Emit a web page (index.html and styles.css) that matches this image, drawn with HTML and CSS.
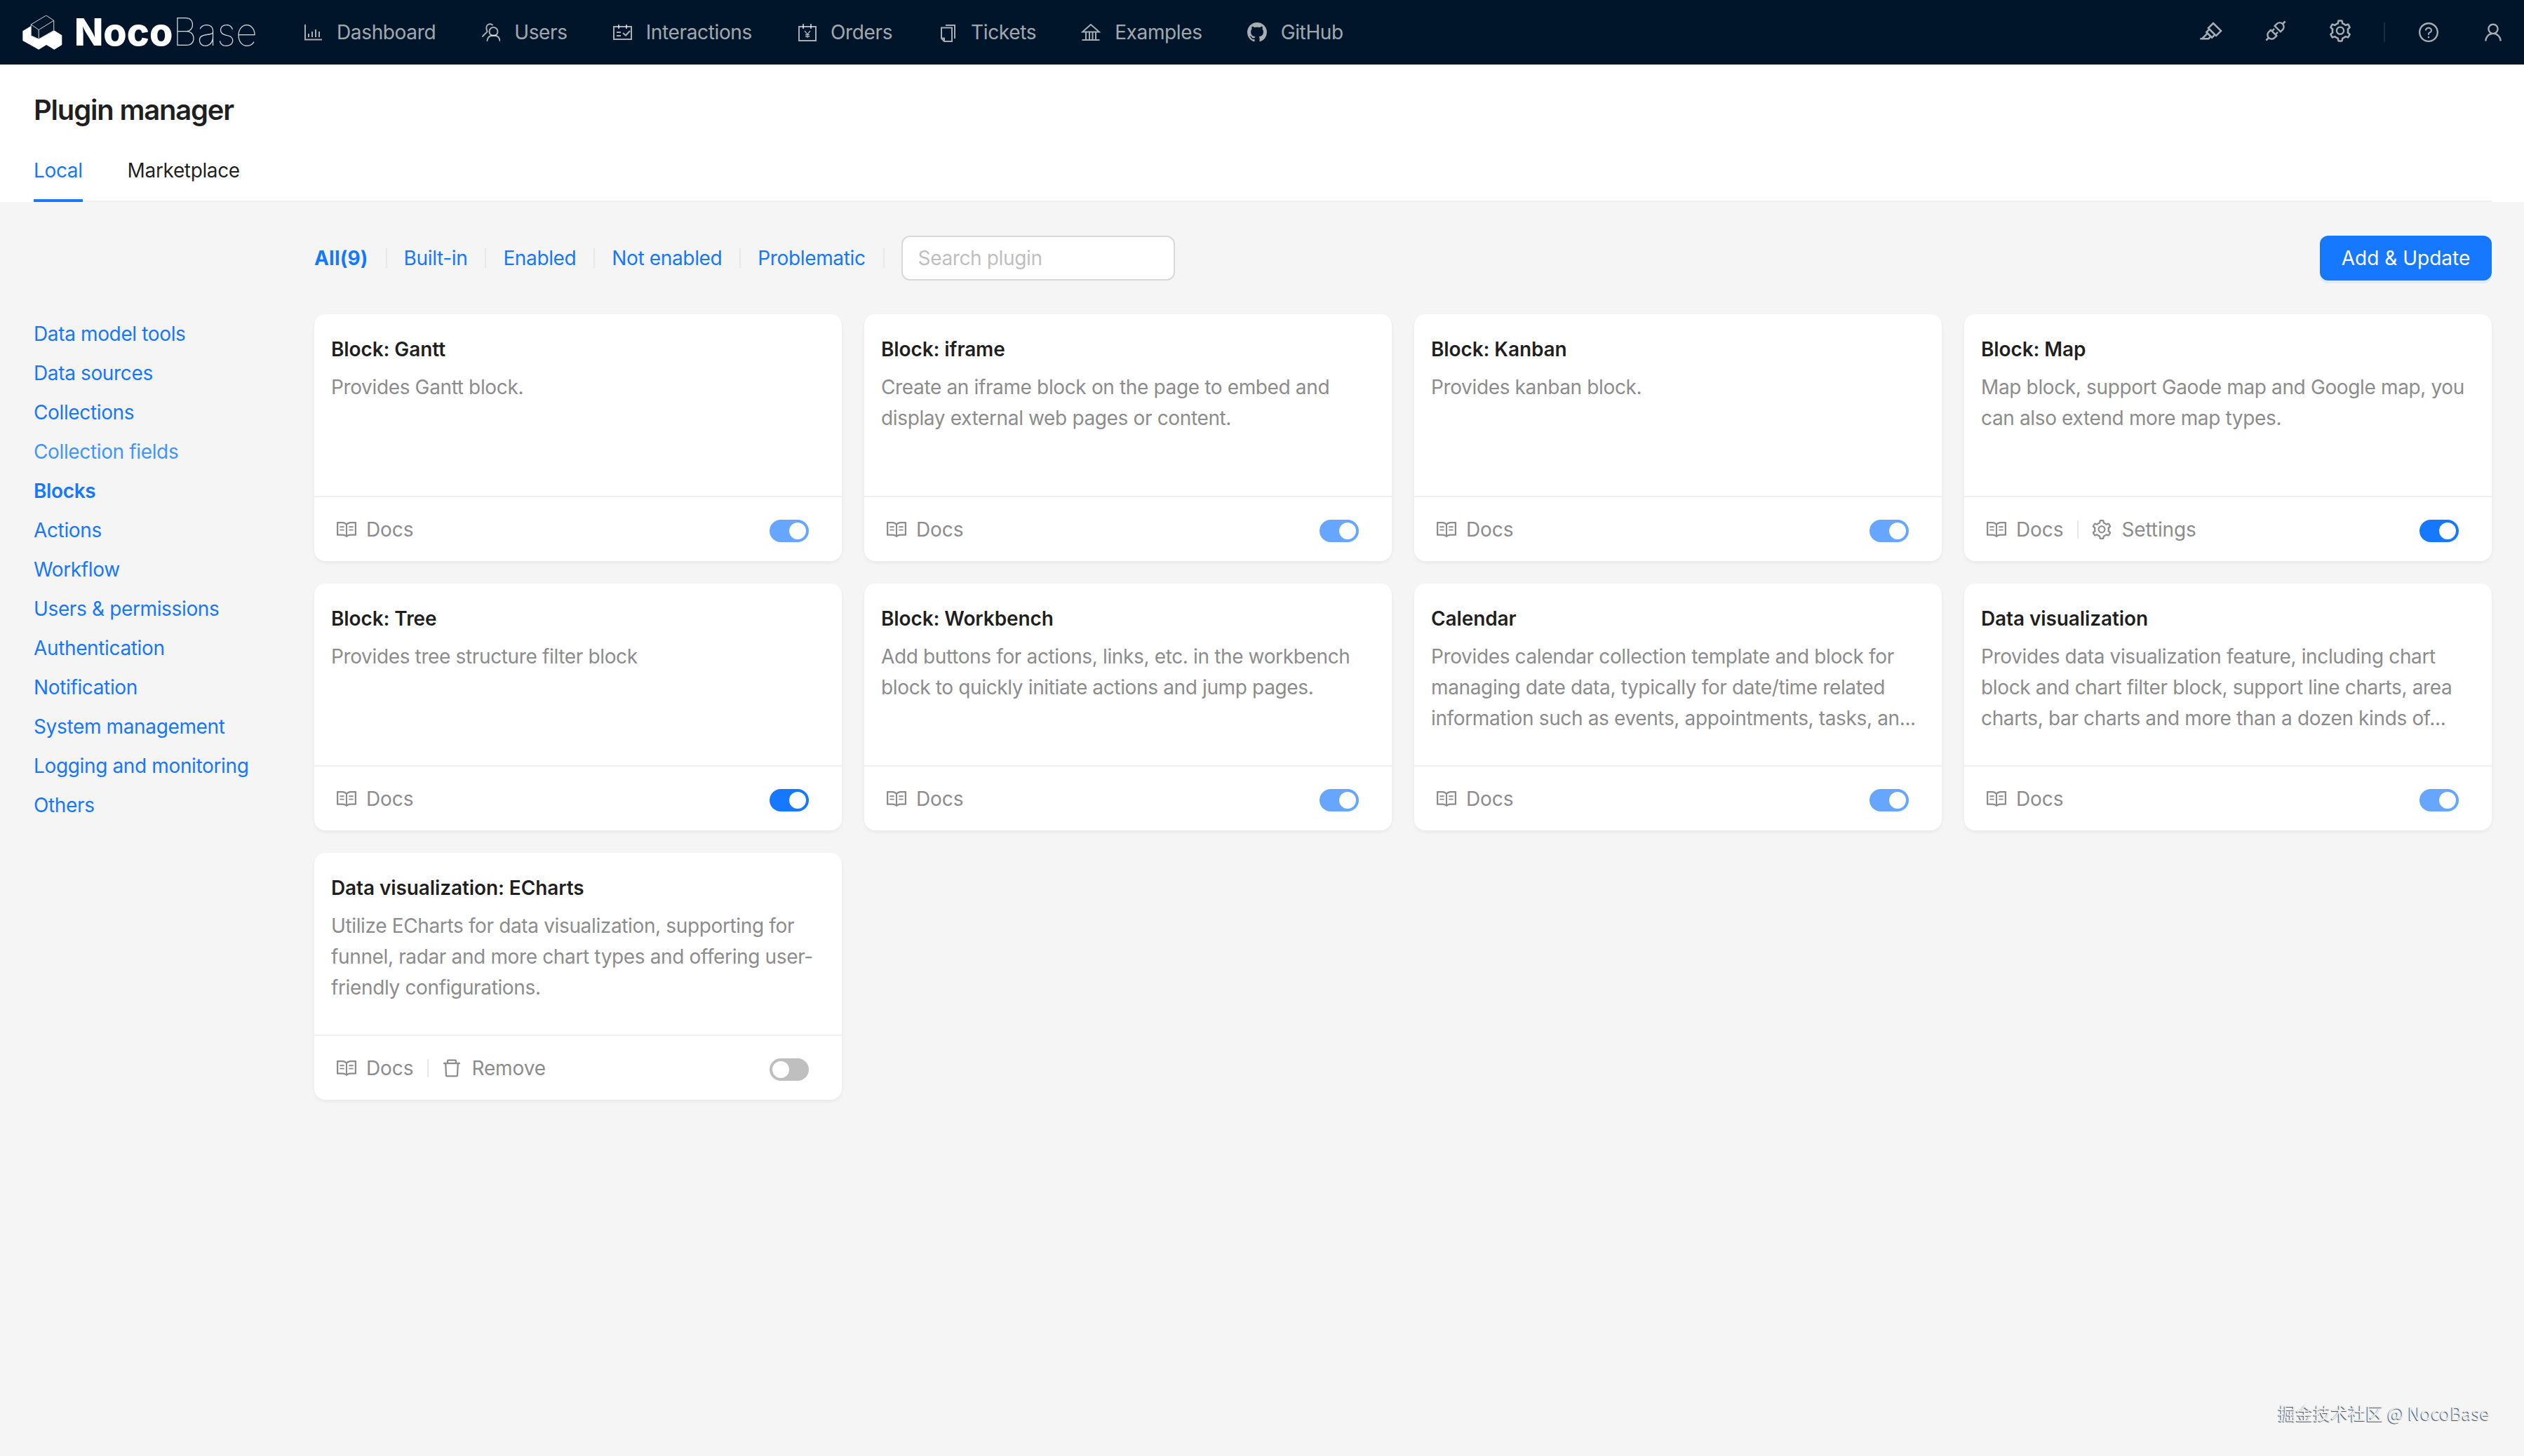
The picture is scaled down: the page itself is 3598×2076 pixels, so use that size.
FILE: index.html
```html
<!DOCTYPE html>
<html lang="en">
<head>
    <meta charset="UTF-8">
    <meta name="viewport" content="width=device-width, initial-scale=1.0">
    <title>Plugin manager</title>
    <link rel="stylesheet" href="styles.css">
</head>
<body>
    <!-- icon sprite -->
    <svg class="sprite" xmlns="http://www.w3.org/2000/svg">
        <symbol id="i-chart" viewBox="0 0 28 28"><path d="M3 3v21.500h24M8 21v-5M13 21v-8M18 21v-11M23 21v-8" fill="none" stroke="currentColor" stroke-width="2"/></symbol>
        <symbol id="i-users" viewBox="0 0 28 28"><g fill="none" stroke="currentColor" stroke-width="2" stroke-linecap="round"><circle cx="18.500" cy="13" r="6"/><path d="M9.500 26c.5-5 4-7.500 9-7.500s8.500 2.500 9 7.500M17 3.500c-1.500-1-3.500-1.500-5-1-3 1-4 4-3.500 6.500.3 1.800.8 3 1 4-1.500 2.500-4.500 4-6.500 7"/></g></symbol>
        <symbol id="i-schedule" viewBox="0 0 28 28"><g fill="none" stroke="currentColor" stroke-width="2"><rect x="2" y="6" width="25" height="18"/><path d="M9 3v6M20 3v6M6 14h6M6 19h6M15 15l4 3.500 6-6.500"/></g></symbol>
        <symbol id="i-orders" viewBox="0 0 28 28"><g fill="none" stroke="currentColor" stroke-width="2"><rect x="3" y="6" width="24" height="20"/><path d="M9 2v7M20 2v7"/><path d="M11 12l4 5 4-5M15 17v5M12 17.500h6M12 20h6" stroke-width="1.300"/></g></symbol>
        <symbol id="i-tickets" viewBox="0 0 28 28"><g fill="none" stroke="currentColor" stroke-width="2"><path d="M6 7.500h15v19.500h-11l-4-4.500zM10 27v-4.500h-4"/><path d="M12 4h13v19"/></g></symbol>
        <symbol id="i-bank" viewBox="0 0 28 28"><g fill="none" stroke="currentColor" stroke-width="2"><path d="M14 3L2 13.500h24zM7 14v10M12 14v10M16.500 14v10M21 14v10M1.500 25h25"/></g></symbol>
        <symbol id="i-github" viewBox="0 0 16 16"><path fill="currentColor" d="M8 0C3.580 0 0 3.580 0 8c0 3.540 2.290 6.530 5.470 7.590.4.070.55-.17.55-.38 0-.19-.01-.82-.01-1.490-2.010.37-2.530-.49-2.690-.94-.09-.23-.48-.94-.82-1.130-.28-.15-.68-.52-.01-.53.63-.01 1.080.58 1.230.82.72 1.210 1.870.87 2.330.66.07-.52.28-.87.51-1.070-1.780-.2-3.640-.89-3.640-3.950 0-.87.31-1.590.82-2.150-.08-.2-.36-1.020.08-2.120 0 0 .67-.21 2.200.82.64-.18 1.320-.27 2-.27.68 0 1.360.09 2 .27 1.530-1.040 2.200-.82 2.200-.82.44 1.100.16 1.920.08 2.120.51.56.82 1.270.82 2.150 0 3.070-1.870 3.750-3.650 3.950.29.25.54.73.54 1.480 0 1.070-.01 1.930-.01 2.200 0 .21.15.46.55.38A8.013 8.013 0 0016 8c0-4.420-3.580-8-8-8z"/></symbol>
        <symbol id="i-highlight" viewBox="0 0 1024 1024"><path fill="currentColor" d="M957.6 507.4L603.2 158.2a7.9 7.9 0 0 0-11.2 0L353.3 393.4a8.03 8.03 0 0 0-.1 11.3l.1.1 40 39.4-117.2 115.3a8.03 8.03 0 0 0-.1 11.3l.1.1 39.5 38.9-189.1 187H72.1c-4.4 0-8.1 3.6-8.1 8V860c0 4.4 3.6 8 8 8h344.9c2.1 0 4.1-.8 5.6-2.3l76.1-75.6 40.4 39.8a7.9 7.9 0 0 0 11.2 0l117.1-115.6 40.1 39.5a7.9 7.9 0 0 0 11.2 0l238.7-235.2c3.4-3 3.4-8 .3-11.2zM389.8 796.2H229.6l134.4-133 80.1 78.9-54.3 54.1zm154.8-62.1L373.2 565.2l68.6-67.6 171.4 168.9-68.6 67.6zM713.1 658L450.3 399.1 597.6 254l262.8 259-147.3 145z"/></symbol>
        <symbol id="i-api" viewBox="0 0 1024 1024"><path fill="currentColor" d="M917.7 148.8l-42.4-42.4c-1.6-1.6-3.6-2.3-5.7-2.3s-4.1.8-5.7 2.3l-76.1 76.1a199.27 199.27 0 0 0-112.1-34.3c-51.2 0-102.4 19.5-141.5 58.6L432.3 308.7a8.03 8.03 0 0 0 0 11.3L704 591.7c1.6 1.6 3.6 2.3 5.7 2.3 2 0 4.1-.8 5.7-2.3l101.9-101.9c68.9-69 77-175.7 24.3-253.5l76.1-76.1c3-3.2 3-8.2-.1-11.4zM769.1 441.7l-59.4 59.4-186.8-186.8 59.4-59.4c24.9-24.9 58.1-38.7 93.4-38.7 35.3 0 68.4 13.7 93.4 38.7 24.9 24.9 38.7 58.1 38.7 93.4 0 35.3-13.8 68.4-38.7 93.4zm-190.2 105a8.03 8.03 0 0 0-11.3 0L501 613.3 410.7 523l66.7-66.7c3.1-3.1 3.1-8.2 0-11.3L441 408.6a8.03 8.03 0 0 0-11.3 0L363 475.3l-43-43a7.85 7.85 0 0 0-5.7-2.3c-2 0-4.1.8-5.7 2.3L206.8 534.2c-68.9 69-77 175.7-24.3 253.5l-76.1 76.1a8.03 8.03 0 0 0 0 11.3l42.4 42.4c1.6 1.6 3.6 2.3 5.7 2.3s4.1-.8 5.7-2.3l76.1-76.1c33.7 22.9 72.9 34.3 112.1 34.3 51.2 0 102.4-19.5 141.5-58.6l101.9-101.9c3.1-3.1 3.1-8.2 0-11.3l-43-43 66.7-66.7c3.1-3.1 3.1-8.2 0-11.3l-36.6-36.2zM441.7 769.1a131.32 131.32 0 0 1-93.4 38.7c-35.3 0-68.4-13.7-93.4-38.7a131.32 131.32 0 0 1-38.7-93.4c0-35.3 13.7-68.4 38.7-93.4l59.4-59.4 186.8 186.8-59.4 59.4z"/></symbol>
        <symbol id="i-setting" viewBox="0 0 1024 1024"><path fill="currentColor" d="M924.8 625.7l-65.5-56c3.1-19 4.7-38.4 4.7-57.8s-1.6-38.8-4.7-57.8l65.5-56a32.03 32.03 0 0 0 9.3-35.2l-.9-2.6a443.74 443.74 0 0 0-79.7-137.9l-1.8-2.1a32.12 32.12 0 0 0-35.1-9.5l-81.3 28.9c-30-24.6-63.5-44-99.7-57.6l-15.7-85a32.05 32.05 0 0 0-25.8-25.7l-2.7-.5c-52.1-9.4-106.9-9.4-159 0l-2.7.5a32.05 32.05 0 0 0-25.8 25.7l-15.8 85.4a351.86 351.86 0 0 0-99 57.4l-81.9-29.1a32 32 0 0 0-35.1 9.5l-1.8 2.1a446.02 446.02 0 0 0-79.7 137.9l-.9 2.6c-4.5 12.5-.8 26.5 9.3 35.2l66.3 56.6c-3.1 18.8-4.6 38-4.6 57.1 0 19.2 1.5 38.4 4.6 57.1L99 625.5a32.03 32.03 0 0 0-9.3 35.2l.9 2.6c18.1 50.4 44.9 96.9 79.7 137.9l1.8 2.1a32.12 32.12 0 0 0 35.1 9.5l81.9-29.1c29.8 24.5 63.1 43.9 99 57.4l15.8 85.4a32.05 32.05 0 0 0 25.8 25.7l2.7.5a449.4 449.4 0 0 0 159 0l2.7-.5a32.05 32.05 0 0 0 25.8-25.7l15.7-85a350 350 0 0 0 99.7-57.6l81.3 28.9a32 32 0 0 0 35.1-9.5l1.8-2.1c34.8-41.1 61.6-87.5 79.7-137.9l.9-2.6c4.5-12.3.8-26.3-9.3-35zM788.3 465.9c2.5 15.1 3.8 30.6 3.8 46.1s-1.3 31-3.8 46.1l-6.6 40.1 74.7 63.9a370.03 370.03 0 0 1-42.6 73.6L721 702.8l-31.4 25.8c-23.9 19.6-50.5 35-79.3 45.8l-38.1 14.3-17.9 97a377.5 377.5 0 0 1-85 0l-17.9-97.2-37.8-14.5c-28.5-10.8-55-26.2-78.7-45.7l-31.4-25.9-93.4 33.2c-17-22.9-31.2-47.6-42.6-73.6l75.5-64.5-6.5-40c-2.4-14.9-3.7-30.3-3.7-45.5 0-15.3 1.2-30.6 3.7-45.5l6.5-40-75.5-64.5c11.3-26.1 25.6-50.7 42.6-73.6l93.4 33.2 31.4-25.9c23.7-19.5 50.2-34.9 78.7-45.7l37.9-14.3 17.9-97.2c28.1-3.2 56.8-3.2 85 0l17.9 97 38.1 14.3c28.7 10.8 55.4 26.2 79.3 45.8l31.4 25.8 92.8-32.9c17 22.9 31.2 47.6 42.6 73.6L781.8 426l6.5 39.9zM512 326c-97.2 0-176 78.8-176 176s78.8 176 176 176 176-78.8 176-176-78.8-176-176-176zm79.2 255.2A111.6 111.6 0 0 1 512 614c-29.9 0-58-11.7-79.2-32.8A111.6 111.6 0 0 1 400 502c0-29.9 11.7-58 32.8-79.2C454 401.6 482.1 390 512 390c29.9 0 58 11.6 79.2 32.8A111.6 111.6 0 0 1 624 502c0 29.9-11.7 58-32.8 79.2z"/></symbol>
        <symbol id="i-help" viewBox="0 0 1024 1024"><path fill="currentColor" d="M512 64C264.6 64 64 264.6 64 512s200.6 448 448 448 448-200.6 448-448S759.4 64 512 64zm0 820c-205.4 0-372-166.6-372-372s166.6-372 372-372 372 166.6 372 372-166.6 372-372 372z"/><path fill="currentColor" d="M623.6 316.7C593.6 290.4 554 276 512 276s-81.6 14.5-111.6 40.7C369.2 344 352 380.7 352 420v7.6c0 4.4 3.6 8 8 8h48c4.4 0 8-3.6 8-8V420c0-44.1 43.1-80 96-80s96 35.9 96 80c0 31.1-22 59.6-56.1 72.7-21.2 8.1-39.2 22.3-52.1 40.9-13.1 19-19.9 41.8-19.9 64.9V620c0 4.4 3.6 8 8 8h48c4.4 0 8-3.6 8-8v-22.7a48.3 48.3 0 0 1 30.9-44.8c59-22.7 97.1-74.7 97.1-132.5.1-39.3-17.1-76-48.3-103.3zM472 732a40 40 0 1 0 80 0 40 40 0 1 0-80 0z"/></symbol>
        <symbol id="i-user" viewBox="0 0 1024 1024"><path fill="currentColor" d="M858.5 763.6a374 374 0 0 0-80.6-119.5 375.63 375.63 0 0 0-119.5-80.6c-.4-.2-.8-.3-1.2-.5C719.5 518 760 444.7 760 362c0-137-111-248-248-248S264 225 264 362c0 82.7 40.5 156 102.8 201.1-.4.2-.8.3-1.2.5-44.8 18.9-85 46-119.5 80.6a375.63 375.63 0 0 0-80.6 119.5A371.7 371.7 0 0 0 136 901.8a8 8 0 0 0 8 8.2h60c4.4 0 7.9-3.5 8-7.8 2-77.2 33-149.5 87.8-204.3 56.7-56.7 132-87.9 212.2-87.9s155.5 31.2 212.2 87.9C779 752.7 810 825 812 902.2c.1 4.4 3.6 7.8 8 7.8h60a8 8 0 0 0 8-8.2c-1-47.8-10.9-94.3-29.5-138.2zM512 534c-45.9 0-89.1-17.9-121.6-50.4S340 407.9 340 362c0-45.9 17.9-89.1 50.4-121.6S466.1 190 512 190s89.1 17.9 121.6 50.4S684 316.1 684 362c0 45.9-17.9 89.1-50.4 121.6S557.9 534 512 534z"/></symbol>
        <symbol id="i-read" viewBox="0 0 1024 1024"><path fill="currentColor" d="M928 161H699.2c-49.1 0-97.1 14.1-138.4 40.7L512 233l-48.8-31.3A255.2 255.2 0 0 0 324.8 161H96c-17.7 0-32 14.3-32 32v568c0 17.7 14.3 32 32 32h228.8c49.1 0 97.1 14.1 138.4 40.7l44.4 28.6c1.3.8 2.8 1.3 4.3 1.3s3-.4 4.3-1.3l44.4-28.6C602 807.1 650.1 793 699.2 793H928c17.7 0 32-14.3 32-32V193c0-17.7-14.3-32-32-32zM324.8 721H136V233h188.8c35.4 0 69.8 10.1 99.5 29.2l48.8 31.3 6.9 4.5v462c-47.6-25.6-100.8-39-155.2-39zm563.2 0H699.2c-54.4 0-107.6 13.4-155.2 39V298l6.9-4.5 48.8-31.3c29.7-19.1 64.1-29.2 99.5-29.2H888v488zM396.9 361H211.1c-3.9 0-7.1 3.4-7.1 7.5v45c0 4.1 3.2 7.5 7.1 7.5h185.7c3.9 0 7.1-3.4 7.1-7.5v-45c.1-4.1-3.1-7.5-7-7.5zm223.1 7.5v45c0 4.1 3.2 7.5 7.1 7.5h185.7c3.9 0 7.1-3.4 7.1-7.5v-45c0-4.1-3.2-7.5-7.1-7.5H627.1c-3.9 0-7.1 3.4-7.1 7.5zM396.9 501H211.1c-3.9 0-7.1 3.4-7.1 7.5v45c0 4.1 3.2 7.5 7.1 7.5h185.7c3.9 0 7.1-3.4 7.1-7.5v-45c.1-4.1-3.1-7.5-7-7.5zm416 0H627.1c-3.9 0-7.1 3.4-7.1 7.5v45c0 4.1 3.2 7.5 7.1 7.5h185.7c3.9 0 7.1-3.4 7.1-7.5v-45c.1-4.1-3.1-7.5-7-7.5z"/></symbol>
        <symbol id="i-delete" viewBox="0 0 1024 1024"><path fill="currentColor" d="M360 184h-8c4.4 0 8-3.6 8-8v8h304v-8c0 4.4 3.6 8 8 8h-8v72h72v-80c0-35.3-28.7-64-64-64H352c-35.3 0-64 28.7-64 64v80h72v-72zm504 72H160c-17.7 0-32 14.3-32 32v32c0 4.4 3.6 8 8 8h60.4l24.7 523c1.6 34.1 29.8 61 63.9 61h454c34.2 0 62.3-26.8 63.9-61l24.7-523H888c4.4 0 8-3.6 8-8v-32c0-17.7-14.3-32-32-32zM731.3 840H292.7l-24.2-512h487l-24.2 512z"/></symbol>
    </svg>

    <header class="topbar">
        <a class="logo">
            <svg class="logo-mark" viewBox="36 33 170 148">
                <path d="M36 100L72 78V120L105 135L172 98L205 118V160L172 180L138 160L105 180L36 142Z" fill="#fff"/>
                <path d="M137 33L170 55V98L105 135L72 120V72ZM72 72L105 95L170 55M105 95V135" fill="#001529" stroke="#d5dae0" stroke-width="3"/>
            </svg>
            <span class="logo-bold">Noco</span><span class="logo-thin">Base</span>
        </a>
        <nav class="main-nav">
            <a class="nav-item"><svg class="nav-icon"><use href="#i-chart"/></svg>Dashboard</a>
            <a class="nav-item"><svg class="nav-icon"><use href="#i-users"/></svg>Users</a>
            <a class="nav-item"><svg class="nav-icon"><use href="#i-schedule"/></svg>Interactions</a>
            <a class="nav-item"><svg class="nav-icon"><use href="#i-orders"/></svg>Orders</a>
            <a class="nav-item"><svg class="nav-icon"><use href="#i-tickets"/></svg>Tickets</a>
            <a class="nav-item"><svg class="nav-icon"><use href="#i-bank"/></svg>Examples</a>
            <a class="nav-item"><svg class="nav-icon"><use href="#i-github"/></svg>GitHub</a>
        </nav>
        <div class="tools">
            <a class="tool"><svg class="tool-icon-lg"><use href="#i-highlight"/></svg></a>
            <a class="tool"><svg class="tool-icon-lg"><use href="#i-api"/></svg></a>
            <a class="tool"><svg class="tool-icon-lg"><use href="#i-setting"/></svg></a>
            <span class="tool-sep"></span>
            <a class="tool"><svg class="tool-icon"><use href="#i-help"/></svg></a>
            <a class="tool"><svg class="tool-icon"><use href="#i-user"/></svg></a>
        </div>
    </header>

    <section class="page-head">
        <h1>Plugin manager</h1>
        <div class="tabs">
            <a class="tab active">Local</a>
            <a class="tab">Marketplace</a>
        </div>
    </section>

    <div class="content">
        <aside class="side">
            <a>Data model tools</a>
            <a>Data sources</a>
            <a>Collections</a>
            <a class="hover">Collection fields</a>
            <a class="current">Blocks</a>
            <a>Actions</a>
            <a>Workflow</a>
            <a>Users &amp; permissions</a>
            <a>Authentication</a>
            <a>Notification</a>
            <a>System management</a>
            <a>Logging and monitoring</a>
            <a>Others</a>
        </aside>

        <main class="main">
            <div class="toolbar">
                <a class="filter current">All(9)</a>
                <span class="filter-sep"></span>
                <a class="filter">Built-in</a>
                <span class="filter-sep"></span>
                <a class="filter">Enabled</a>
                <span class="filter-sep"></span>
                <a class="filter">Not enabled</a>
                <span class="filter-sep"></span>
                <a class="filter">Problematic</a>
                <span class="filter-sep"></span>
                <input class="search" type="text" placeholder="Search plugin">
                <button class="add-button">Add &amp; Update</button>
            </div>

            <div class="cards">
                <div class="card">
                    <div class="card-body">
                        <div class="card-title">Block: Gantt</div>
                        <p class="card-desc">Provides Gantt block.</p>
                    </div>
                    <div class="card-foot">
                        <a class="action"><svg class="action-icon"><use href="#i-read"/></svg>Docs</a>
                        <span class="switch on dim"><i></i></span>
                    </div>
                </div>
                <div class="card">
                    <div class="card-body">
                        <div class="card-title">Block: iframe</div>
                        <p class="card-desc">Create an iframe block on the page to embed and display external web pages or content.</p>
                    </div>
                    <div class="card-foot">
                        <a class="action"><svg class="action-icon"><use href="#i-read"/></svg>Docs</a>
                        <span class="switch on dim"><i></i></span>
                    </div>
                </div>
                <div class="card">
                    <div class="card-body">
                        <div class="card-title">Block: Kanban</div>
                        <p class="card-desc">Provides kanban block.</p>
                    </div>
                    <div class="card-foot">
                        <a class="action"><svg class="action-icon"><use href="#i-read"/></svg>Docs</a>
                        <span class="switch on dim"><i></i></span>
                    </div>
                </div>
                <div class="card">
                    <div class="card-body">
                        <div class="card-title">Block: Map</div>
                        <p class="card-desc">Map block, support Gaode map and Google map, you can also extend more map types.</p>
                    </div>
                    <div class="card-foot">
                        <a class="action"><svg class="action-icon"><use href="#i-read"/></svg>Docs</a>
                        <span class="action-sep"></span>
                        <a class="action"><svg class="action-icon"><use href="#i-setting"/></svg>Settings</a>
                        <span class="switch on"><i></i></span>
                    </div>
                </div>
                <div class="card">
                    <div class="card-body">
                        <div class="card-title">Block: Tree</div>
                        <p class="card-desc">Provides tree structure filter block</p>
                    </div>
                    <div class="card-foot">
                        <a class="action"><svg class="action-icon"><use href="#i-read"/></svg>Docs</a>
                        <span class="switch on"><i></i></span>
                    </div>
                </div>
                <div class="card">
                    <div class="card-body">
                        <div class="card-title">Block: Workbench</div>
                        <p class="card-desc">Add buttons for actions, links, etc. in the workbench block to quickly initiate actions and jump pages.</p>
                    </div>
                    <div class="card-foot">
                        <a class="action"><svg class="action-icon"><use href="#i-read"/></svg>Docs</a>
                        <span class="switch on dim"><i></i></span>
                    </div>
                </div>
                <div class="card">
                    <div class="card-body">
                        <div class="card-title">Calendar</div>
                        <p class="card-desc">Provides calendar collection template and block for managing date data, typically for date/time related information such as events, appointments, tasks, an...</p>
                    </div>
                    <div class="card-foot">
                        <a class="action"><svg class="action-icon"><use href="#i-read"/></svg>Docs</a>
                        <span class="switch on dim"><i></i></span>
                    </div>
                </div>
                <div class="card">
                    <div class="card-body">
                        <div class="card-title">Data visualization</div>
                        <p class="card-desc">Provides data visualization feature, including chart block and chart filter block, support line charts, area charts, bar charts and more than a dozen kinds of...</p>
                    </div>
                    <div class="card-foot">
                        <a class="action"><svg class="action-icon"><use href="#i-read"/></svg>Docs</a>
                        <span class="switch on dim"><i></i></span>
                    </div>
                </div>
                <div class="card">
                    <div class="card-body">
                        <div class="card-title">Data visualization: ECharts</div>
                        <p class="card-desc">Utilize ECharts for data visualization, supporting for funnel, radar and more chart types and offering user-friendly configurations.</p>
                    </div>
                    <div class="card-foot">
                        <a class="action"><svg class="action-icon"><use href="#i-read"/></svg>Docs</a>
                        <span class="action-sep"></span>
                        <a class="action"><svg class="action-icon"><use href="#i-delete"/></svg>Remove</a>
                        <span class="switch"><i></i></span>
                    </div>
                </div>
            </div>
        </main>
    </div>

    <div class="watermark">掘金技术社区 @ NocoBase</div>
</body>
</html>
```

FILE: styles.css
```css
* {
    box-sizing: border-box;
}

body {
    margin: 0;
    min-height: 100vh;
    background-color: #f5f5f5;
    color: rgba(0, 0, 0, 0.88);
    font-family: Inter, "Noto Sans CJK SC", sans-serif;
    font-size: 28px;
    line-height: 44px;
    letter-spacing: -0.36px;
    position: relative;
    overflow: hidden;
}

.sprite {
    display: none;
}

/* top bar */
.topbar {
    height: 92px;
    background-color: #001529;
    color: rgba(255, 255, 255, 0.65);
    display: flex;
    align-items: center;
    padding-left: 32px;
}

.logo {
    width: 336px;
    margin-right: 32px;
    display: flex;
    align-items: center;
    font-size: 54px;
    line-height: 92px;
    letter-spacing: 0;
    color: #fff;
}

.logo-mark {
    width: 57px;
    height: 49px;
    margin-right: 17px;
    flex: none;
}

.logo-bold {
    font-weight: 800;
}

.logo-thin {
    font-weight: 100;
    color: #d5dae0;
}

.main-nav {
    display: flex;
}

.nav-item {
    display: flex;
    align-items: center;
    padding: 0 32px;
    height: 92px;
    white-space: nowrap;
}

.nav-icon {
    width: 28px;
    height: 28px;
    margin-right: 20px;
}

.tools {
    margin-left: auto;
    margin-right: -2px;
    display: flex;
    align-items: center;
}

.tool {
    width: 92px;
    height: 92px;
    display: flex;
    align-items: center;
    justify-content: center;
}

.tool-icon {
    width: 32px;
    height: 32px;
}

.tool-icon-lg {
    width: 36px;
    height: 36px;
    margin-top: -4px;
}

.tool-sep {
    width: 2px;
    height: 28px;
    margin: 0 16px;
    background-color: #1a2c3e;
}

/* page header */
.page-head {
    background-color: #fff;
    height: 196px;
    padding: 37px 46px 0 48px;
}

.page-head h1 {
    margin: 0 0 36px;
    font-size: 40px;
    line-height: 56px;
    font-weight: 600;
    letter-spacing: -1.2px;
}

.tabs {
    display: flex;
    gap: 64px;
    border-bottom: 2px solid #f0f0f0;
}

.tab {
    padding-bottom: 19px;
    border-bottom: 4px solid transparent;
    margin-bottom: -2px;
}

.tab.active {
    color: #1677ff;
    border-bottom-color: #1677ff;
}

/* content */
.content {
    display: flex;
    padding: 48px 46px 0 48px;
}

.side {
    width: 400px;
    flex: none;
    margin-top: 112px;
    display: flex;
    flex-direction: column;
    color: #1677ff;
}

.side a {
    height: 56px;
    line-height: 56px;
}

.side .hover {
    color: #4096ff;
}

.side .current {
    font-weight: 600;
}

.main {
    flex: 1;
}

.toolbar {
    display: flex;
    align-items: center;
    height: 64px;
    margin-bottom: 48px;
    color: #1677ff;
}

.filter.current {
    font-weight: 700;
    letter-spacing: 0.2px;
}

.filter-sep {
    width: 2px;
    height: 28px;
    margin: 0 24px 0 25px;
    background-color: #e8e8e8;
}

.search {
    width: 390px;
    height: 64px;
    padding: 0 22px;
    border: 2px solid #d9d9d9;
    border-radius: 12px;
    background-color: #fff;
    font-family: inherit;
    font-size: 28px;
    letter-spacing: -0.36px;
    outline: none;
}

.search::placeholder {
    color: #bfbfbf;
}

.add-button {
    width: 245px;
    height: 64px;
    margin-left: auto;
    border: none;
    border-radius: 12px;
    background-color: #1677ff;
    color: #fff;
    font-family: inherit;
    font-size: 28px;
    box-shadow: 0 4px 0 rgba(5, 145, 255, 0.1);
}

/* plugin cards */
.cards {
    display: grid;
    grid-template-columns: repeat(4, 1fr);
    gap: 32px;
}

.card {
    height: 352px;
    display: flex;
    flex-direction: column;
    background-color: #fff;
    border-radius: 16px;
    box-shadow: 0 2px 4px rgba(0, 0, 0, 0.03), 0 2px 12px -2px rgba(0, 0, 0, 0.02), 0 4px 8px rgba(0, 0, 0, 0.02);
}

.card-body {
    flex: 1;
    padding: 28px 24px 0;
}

.card-title {
    font-weight: 600;
    letter-spacing: -0.1px;
    margin-bottom: 10px;
}

.card-desc {
    margin: 0;
    color: #8c8c8c;
}

.card-foot {
    height: 93px;
    display: flex;
    align-items: center;
    padding: 0 47px 0 30px;
    border-top: 2px solid #f0f0f0;
    color: #8c8c8c;
}

.action {
    display: flex;
    align-items: center;
    letter-spacing: -0.1px;
}

.action-icon {
    width: 32px;
    height: 32px;
    margin-right: 12px;
}

.action-sep {
    width: 2px;
    height: 26px;
    margin: 0 17px 0 20px;
    background-color: #e8e8e8;
}

.switch {
    width: 56px;
    height: 32px;
    margin-left: auto;
    margin-top: 5px;
    padding: 4px;
    display: flex;
    border-radius: 16px;
    background-color: #bfbfbf;
}

.switch.on {
    justify-content: flex-end;
    background-color: #1677ff;
}

.switch.dim {
    opacity: 0.65;
}

.switch i {
    width: 24px;
    height: 24px;
    border-radius: 50%;
    background-color: #fff;
}

.watermark {
    position: absolute;
    right: 49px;
    bottom: 45px;
    font-size: 25px;
    line-height: 34px;
    letter-spacing: 0;
    font-family: "Noto Sans CJK SC", sans-serif;
    color: #f0f0f0;
    text-shadow: -1px 1px 1px rgba(0, 0, 0, 0.7);
}
```
